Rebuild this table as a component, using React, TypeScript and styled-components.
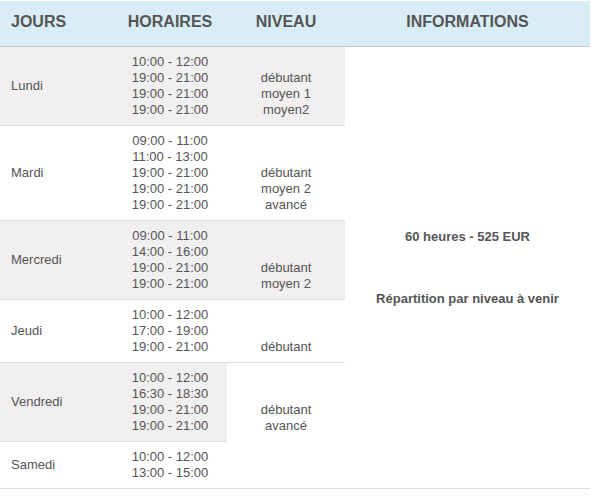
import React from "react";
import styled, { createGlobalStyle } from "styled-components";

const GlobalStyle = createGlobalStyle`
  html, body { margin: 0; padding: 0; background: #fff; }
  body { font-family: "Liberation Sans", Arial, sans-serif; color: #555; }
`;

const Wrapper = styled.div`
  padding-top: 1px;
  width: 591px;
`;

const Table = styled.table`
  width: 590px;
  border-collapse: collapse;
  border-spacing: 0;
  table-layout: fixed;
  font-family: "Liberation Sans", Arial, sans-serif;
`;

const HeadRow = styled.tr`
  background: #d9edf6;
`;

const HeadCell = styled.th<{ $align?: string; $width: number }>`
  width: ${(p) => p.$width}px;
  padding: 0 0 3px ${(p) => (p.$align === "left" ? "11px" : "0")};
  line-height: 42px;
  font-size: 16px;
  font-weight: bold;
  color: #555;
  text-align: ${(p) => p.$align || "center"};
  border-bottom: 1px solid #c9c9c9;
  box-sizing: border-box;
`;

const Cell = styled.td<{ $shade?: boolean }>`
  padding: 7px 0;
  font-size: 13px;
  line-height: 16px;
  color: #555;
  background: ${(p) => (p.$shade ? "#f1eff0" : "#fff")};
  border-bottom: 1px solid #dedede;
  vertical-align: middle;
`;

const DayCell = styled(Cell)`
  padding-left: 11px;
  text-align: left;
`;

const HoursCell = styled(Cell)`
  text-align: center;
`;

const LevelCell = styled(Cell)<{ $lead: number }>`
  text-align: center;
  vertical-align: top;
  padding-top: ${(p) => 7 + p.$lead * 16}px;
`;

const InfoCell = styled(Cell)`
  text-align: center;
  vertical-align: middle;
  font-weight: bold;
`;

const InfoBlock = styled.div`
  display: flex;
  flex-direction: column;
  align-items: center;
  gap: 46px;
`;

const Line = styled.div``;

type Row = {
  day: string;
  hours: string[];
  levels?: string[];
  lead?: number;
  span?: number;
};

const rows: Row[] = [
  { day: "Lundi", hours: ["10:00 - 12:00", "19:00 - 21:00", "19:00 - 21:00", "19:00 - 21:00"], levels: ["débutant", "moyen 1", "moyen2"], lead: 1 },
  { day: "Mardi", hours: ["09:00 - 11:00", "11:00 - 13:00", "19:00 - 21:00", "19:00 - 21:00", "19:00 - 21:00"], levels: ["débutant", "moyen 2", "avancé"], lead: 2 },
  { day: "Mercredi", hours: ["09:00 - 11:00", "14:00 - 16:00", "19:00 - 21:00", "19:00 - 21:00"], levels: ["débutant", "moyen 2"], lead: 2 },
  { day: "Jeudi", hours: ["10:00 - 12:00", "17:00 - 19:00", "19:00 - 21:00"], levels: ["débutant"], lead: 2 },
  { day: "Vendredi", hours: ["10:00 - 12:00", "16:30 - 18:30", "19:00 - 21:00", "19:00 - 21:00"], levels: ["débutant", "avancé"], lead: 2, span: 2 },
  { day: "Samedi", hours: ["10:00 - 12:00", "13:00 - 15:00"] },
];

export default function App() {
  return (
    <>
      <GlobalStyle />
      <Wrapper>
        <Table>
          <thead>
            <HeadRow>
              <HeadCell $align="left" $width={113}>JOURS</HeadCell>
              <HeadCell $width={114}>HORAIRES</HeadCell>
              <HeadCell $width={118}>NIVEAU</HeadCell>
              <HeadCell $width={245}>INFORMATIONS</HeadCell>
            </HeadRow>
          </thead>
          <tbody>
            {rows.map((r, i) => {
              const shade = i % 2 === 0;
              return (
                <tr key={r.day}>
                  <DayCell $shade={shade}>{r.day}</DayCell>
                  <HoursCell $shade={shade}>
                    {r.hours.map((h, k) => (
                      <Line key={k}>{h}</Line>
                    ))}
                  </HoursCell>
                  {r.levels && (
                    <LevelCell
                      $shade={shade && !r.span}
                      $lead={r.lead || 0}
                      rowSpan={r.span || 1}
                    >
                      {r.levels.map((l, k) => (
                        <Line key={k}>{l}</Line>
                      ))}
                    </LevelCell>
                  )}
                  {i === 0 && (
                    <InfoCell rowSpan={rows.length}>
                      <InfoBlock>
                        <Line>60 heures - 525 EUR</Line>
                        <Line>Répartition par niveau à venir</Line>
                      </InfoBlock>
                    </InfoCell>
                  )}
                </tr>
              );
            })}
          </tbody>
        </Table>
      </Wrapper>
    </>
  );
}
